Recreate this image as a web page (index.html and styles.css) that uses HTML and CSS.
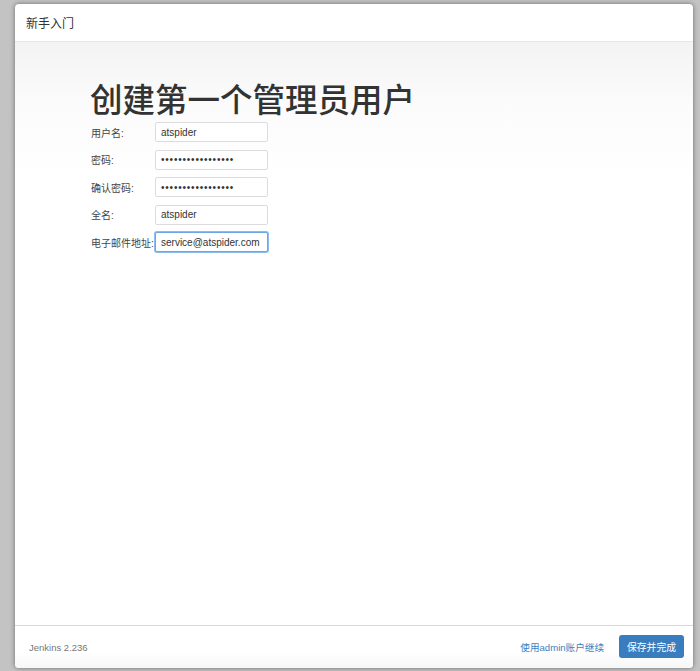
FILE: index.html
```html
<!DOCTYPE html>
<html lang="zh-CN">
<head>
<meta charset="utf-8">
<title>新手入门</title>
<link rel="stylesheet" href="styles.css">
</head>
<body>
<div class="dialog">
  <div class="dialog-header">新手入门</div>
  <div class="dialog-body">
    <h1 class="title">创建第一个管理员用户</h1>
    <form class="form">
      <label class="label" for="u">用户名:</label>
      <input class="field" id="u" type="text" value="atspider">
      <label class="label" for="p1">密码:</label>
      <input class="field pw" id="p1" type="password" value="atspider123456789">
      <label class="label" for="p2">确认密码:</label>
      <input class="field pw" id="p2" type="password" value="atspider123456789">
      <label class="label" for="f">全名:</label>
      <input class="field" id="f" type="text" value="atspider">
      <label class="label" for="e">电子邮件地址:</label>
      <input class="field focused" id="e" type="text" value="service@atspider.com" autofocus>
    </form>
  </div>
  <div class="dialog-footer">
    <span class="version">Jenkins 2.236</span>
    <a class="skip" href="#">使用admin账户继续</a>
    <button class="btn" type="button">保存并完成</button>
  </div>
</div>
</body>
</html>
```
FILE: styles.css
```css
html, body {
  margin: 0;
  padding: 0;
}
body {
  width: 700px;
  height: 671px;
  background: #c3c3c3;
  font-family: "Liberation Sans", "Noto Sans CJK SC", sans-serif;
  color: #333;
  overflow: hidden;
}
.dialog {
  margin: 4px 7px 0 15px;
  width: 678px;
  height: 664px;
  background: #fff;
  border-radius: 4px;
  box-shadow: 0 0 5px rgba(0, 0, 0, 0.45);
  display: flex;
  flex-direction: column;
  overflow: hidden;
}
.dialog-header {
  flex: none;
  box-sizing: border-box;
  border-bottom: 1px solid #e6e6e6;
  height: 38px;
  padding-left: 11px;
  display: flex;
  align-items: center;
  font-size: 12px;
  color: #333;
}
.dialog-body {
  flex: 1;
  padding: 36px 0 0 75px;
  background: linear-gradient(#f3f3f3 0, #fbfbfb 60px, #ffffff 140px);
}
.title {
  margin: 0;
  font-size: 32.5px;
  line-height: 40px;
  font-weight: 500;
  color: #333;
  font-family: "Noto Sans CJK SC", sans-serif;
}
.form {
  margin-top: 4px;
  display: grid;
  grid-template-columns: 64px 113px;
  grid-auto-rows: 20px;
  row-gap: 7.5px;
  padding-left: 1px;
}
.label {
  font-size: 10px;
  color: #444;
  display: flex;
  align-items: center;
  white-space: nowrap;
}
.field {
  box-sizing: border-box;
  width: 113px;
  height: 20px;
  margin: 0;
  border: 1px solid #dcdcdc;
  border-radius: 2px;
  padding: 0 5px;
  font-family: "Liberation Sans", "Noto Sans CJK SC", sans-serif;
  font-size: 10px;
  color: #333;
  background: #fff;
  outline: none;
}
.field.pw {
  letter-spacing: 0.8px;
}
.field.focused {
  border: 1px solid #6aa6e8;
  box-shadow: 0 0 0 1px #8bbcf0;
}
.dialog-footer {
  flex: none;
  height: 43px;
  box-sizing: border-box;
  border-top: 1px solid #d8d8d8;
  background: linear-gradient(#fff 60%, #f7f7f7);
  display: flex;
  align-items: center;
  padding: 0 9px 0 14px;
}
.version {
  font-size: 9.5px;
  color: #777;
  flex: 1;
}
.skip {
  font-size: 9.6px;
  color: #3d7fc0;
  text-decoration: none;
  margin-right: 15px;
}
.btn {
  width: 65px;
  height: 23px;
  border: none;
  border-radius: 3px;
  background: #3a7dbe;
  color: #fff;
  font-family: "Liberation Sans", "Noto Sans CJK SC", sans-serif;
  font-size: 9.8px;
  padding: 0;
  margin-top: -1px;
}
```
